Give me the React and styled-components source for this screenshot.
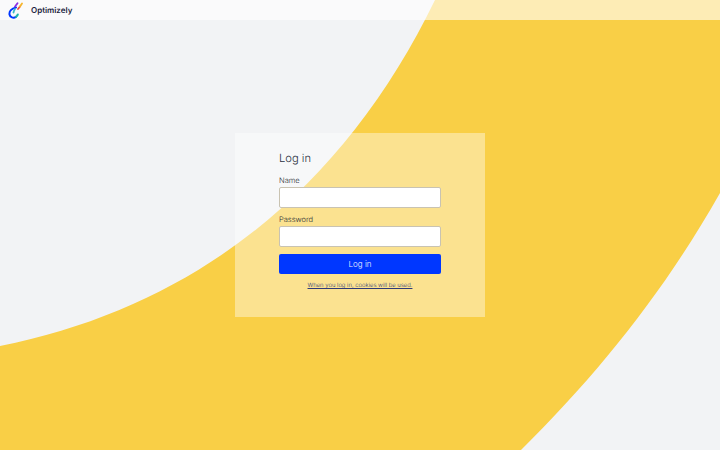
import React from 'react';
import styled, { createGlobalStyle } from 'styled-components';

const GlobalStyle = createGlobalStyle`
    html, body, #root {
        margin: 0;
        height: 100%;
    }
    body {
        font-family: Inter, "Liberation Sans", sans-serif;
        background: #F2F3F5;
        overflow: hidden;
        text-rendering: geometricPrecision;
    }
`;

const Page = styled.div`
    position: relative;
    height: 100%;
    display: flex;
    justify-content: center;
    align-items: center;
`;

const Backdrop = styled.svg`
    position: absolute;
    inset: 0;
    width: 100%;
    height: 100%;
`;

const Header = styled.header`
    position: absolute;
    top: 0;
    left: 0;
    right: 0;
    height: 20px;
    display: flex;
    align-items: center;
    gap: 8px;
    padding-left: 8px;
    background: rgba(255, 255, 255, 0.6);
`;

const Brand = styled.span`
    font-size: 8px;
    font-weight: 600;
    color: #1A2340;
`;

const Card = styled.form`
    position: relative;
    box-sizing: border-box;
    width: 250px;
    height: 184px;
    padding: 18px 44px 0;
    display: flex;
    flex-direction: column;
    background: rgba(255, 255, 255, 0.4);
`;

const Title = styled.h1`
    margin: 0 0 10px;
    font-size: 11.2px;
    line-height: 15px;
    font-weight: 300;
    color: #2A3040;
`;

const Label = styled.label`
    display: block;
    font-size: 7.5px;
    line-height: 9px;
    font-weight: 300;
    margin-bottom: 2px;
    color: #2A2C33;
`;

const Input = styled.input`
    box-sizing: border-box;
    display: block;
    width: 162px;
    height: 21px;
    margin: 0 0 7px;
    padding: 0 4px;
    border: 1px solid #C9C3B2;
    border-radius: 2px;
    background: #FFF;
    outline: none;
`;

const Submit = styled.button`
    width: 162px;
    height: 20px;
    padding: 0;
    border: none;
    border-radius: 2px;
    background: #0037FF;
    color: #F2F5FF;
    font-family: inherit;
    font-size: 8px;
    font-weight: 300;
`;

const Notice = styled.a`
    margin-top: 7px;
    text-align: center;
    font-size: 5.9px;
    line-height: 9px;
    font-weight: 300;
    color: #2E3A78;
    text-decoration: underline;
`;

const Logo = () => (
    <svg width="15" height="17" viewBox="0 0 15 17" fill="none" strokeLinecap="round">
        <path d="M8 5.5C3.5 6.5 1 9.500 1.500 12.500C2 15.500 5.500 16.500 8 14.800" stroke="#0037FF" strokeWidth="2" />
        <path d="M8 14.800C9 14 9.500 13.200 9.800 12.500" stroke="#1FB5A8" strokeWidth="2" />
        <path d="M5.500 10.500C5.700 9.200 6.300 8 7 7" stroke="#3BB8C4" strokeWidth="1.800" />
        <path d="M7 4.500L9.500 1.200" stroke="#8A2BE2" strokeWidth="1.800" />
        <path d="M10 7L12 4.500" stroke="#E8483F" strokeWidth="1.800" />
        <path d="M12 4.500L14 1.500" stroke="#F5B52E" strokeWidth="1.800" />
    </svg>
);

export default function App() {
    return (
        <Page>
            <GlobalStyle />
            <Backdrop viewBox="0 0 720 450" preserveAspectRatio="none">
                <path
                    d="M0 346C200 306 345 185 435 0H720V193C665 290 600 372 521 450H0Z"
                    fill="#F9CF46"
                />
            </Backdrop>
            <Header>
                <Logo />
                <Brand>Optimizely</Brand>
            </Header>
            <Card>
                <Title>Log in</Title>
                <Label htmlFor="name">Name</Label>
                <Input id="name" type="text" />
                <Label htmlFor="password">Password</Label>
                <Input id="password" type="password" />
                <Submit type="button">Log in</Submit>
                <Notice href="#">When you log in, cookies will be used.</Notice>
            </Card>
        </Page>
    );
}
